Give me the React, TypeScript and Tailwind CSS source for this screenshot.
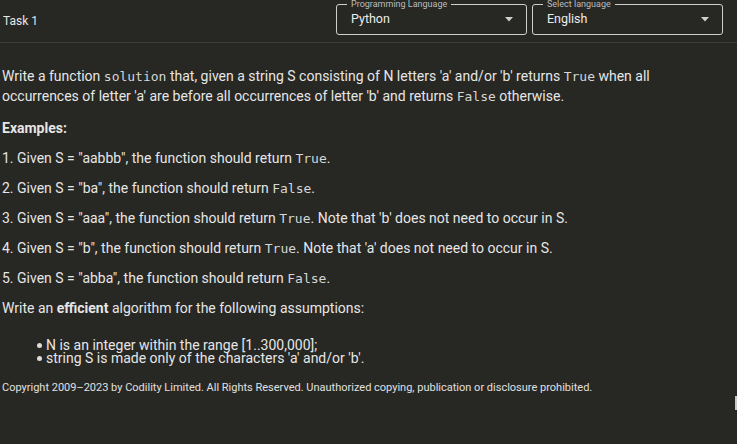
import React from 'react';

const Code: React.FC<{ children: React.ReactNode }> = ({ children }) => (
  <code className="font-['DejaVu_Sans_Mono',monospace] text-[13px] leading-none text-[#d6d6d6]">{children}</code>
);

const SelectBox: React.FC<{ label: string; value: string }> = ({ label, value }) => (
  <div className="relative h-[31px] w-[191px] rounded-[3px] border border-[#cfcfcf] pl-[14px] pr-[13px] flex items-center justify-between">
    <span className="absolute -top-[7px] left-[10px] bg-[#272723] px-[4px] text-[9px] leading-[12px] text-[#bdbdbd]">
      {label}
    </span>
    <span className="text-[12.5px] text-[#ececec]">{value}</span>
    <svg width="8" height="5" viewBox="0 0 8 5">
      <path d="M0 0 L8 0 L4 4.5 Z" fill="#cfcfcf" />
    </svg>
  </div>
);

const Bullet: React.FC<{ children: React.ReactNode }> = ({ children }) => (
  <li className="flex items-center gap-[4px]">
    <span className="h-[5px] w-[5px] shrink-0 rounded-full bg-[#dcdcdc]" />
    <span>{children}</span>
  </li>
);

export default function App() {
  return (
    <div className="relative min-h-[444px] w-full bg-[#272723] font-['Roboto',sans-serif] text-[#e6e6e6]">
      {/* header */}
      <div className="flex h-[43px] items-center justify-between border-b border-[#3c3c38] pl-[3px] pr-[14px]">
        <span className="text-[12px] text-[#e6e6e6]">Task 1</span>
        <div className="flex gap-[5px] -mt-[4px]">
          <SelectBox label="Programming Language" value="Python" />
          <SelectBox label="Select language" value="English" />
        </div>
      </div>

      {/* body */}
      <div className="px-[2px] pt-[23px] text-[14px] leading-[20px]">
        <p className="max-w-[660px]">
          Write a function <Code>solution</Code> that, given a string S consisting of N letters 'a' and/or 'b' returns{' '}
          <Code>True</Code> when all occurrences of letter 'a' are before all occurrences of letter 'b' and returns{' '}
          <Code>False</Code> otherwise.
        </p>
        <p className="mt-[12px] font-bold">Examples:</p>
        <p className="mt-[10px]">1. Given S = "aabbb", the function should return <Code>True</Code>.</p>
        <p className="mt-[10px]">2. Given S = "ba", the function should return <Code>False</Code>.</p>
        <p className="mt-[10px]">
          3. Given S = "aaa", the function should return <Code>True</Code>. Note that 'b' does not need to occur in S.
        </p>
        <p className="mt-[10px]">
          4. Given S = "b", the function should return <Code>True</Code>. Note that 'a' does not need to occur in S.
        </p>
        <p className="mt-[10px]">5. Given S = "abba", the function should return <Code>False</Code>.</p>
        <p className="mt-[10px]">
          Write an <b>efficient</b> algorithm for the following assumptions:
        </p>
        <ul className="mt-[21px] pl-[35px] leading-[13px]">
          <Bullet>N is an integer within the range [1..300,000];</Bullet>
          <Bullet>string S is made only of the characters 'a' and/or 'b'.</Bullet>
        </ul>
        <p className="mt-[16px] text-[11px] leading-[14px] text-[#e0e0e0]">
          Copyright 2009–2023 by Codility Limited. All Rights Reserved. Unauthorized copying, publication or disclosure
          prohibited.
        </p>
      </div>

      <div className="absolute right-0 top-[396px] h-[14px] w-[2px] bg-[#c8c8c8]" />
    </div>
  );
}
